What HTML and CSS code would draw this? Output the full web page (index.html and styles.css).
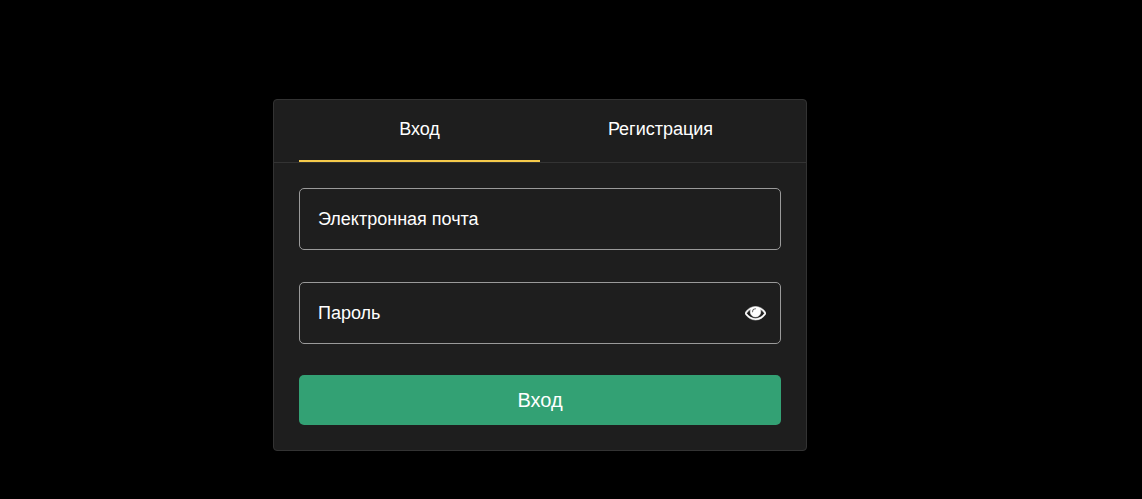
FILE: index.html
```html
<!DOCTYPE html>
<html lang="ru">
<head>
    <meta charset="UTF-8">
    <meta name="viewport" content="width=device-width, initial-scale=1.0">
    <title>Вход</title>
    <link rel="stylesheet" href="styles.css">
</head>
<body>
    <main class="page">
        <div class="auth-card">
            <div class="tabs">
                <button type="button" class="tab active">Вход</button>
                <button type="button" class="tab">Регистрация</button>
            </div>
            <form class="auth-form">
                <div class="field">
                    <input type="email" id="email" class="field-input" placeholder=" ">
                    <label for="email" class="field-label">Электронная почта</label>
                </div>
                <div class="field">
                    <input type="password" id="password" class="field-input" placeholder=" ">
                    <label for="password" class="field-label">Пароль</label>
                    <button type="button" class="toggle-password" aria-label="Показать пароль">
                        <svg width="21" height="21" viewBox="0 0 1792 1792" fill="currentColor" stroke="currentColor" stroke-width="45">
                            <path d="M1664 960q-152-236-381-353 61 104 61 225 0 185-131.500 316.500t-316.500 131.500-316.500-131.500-131.500-316.500q0-121 61-225-229 117-381 353 133 205 333.500 326.500t434.500 121.500 434.500-121.500 333.500-326.500zm-720-384q0-20-14-34t-34-14q-125 0-214.500 89.500t-89.500 214.500q0 20 14 34t34 14 34-14 14-34q0-86 61-147t147-61q20 0 34-14t14-34zm848 384q0 34-20 69-140 230-376.500 368.500t-499.500 138.500-499.500-139-376.500-368q-20-35-20-69t20-69q140-229 376.500-368t499.500-139 499.500 139 376.500 368q20 35 20 69z"/>
                        </svg>
                    </button>
                </div>
                <button type="submit" class="submit-btn">Вход</button>
            </form>
        </div>
    </main>

    <script>
    const password = document.getElementById('password');
    document.querySelector('.toggle-password').addEventListener('click', function() {
        password.type = password.type === 'password' ? 'text' : 'password';
    });
    </script>
</body>
</html>
```
FILE: styles.css
```css
* {
    box-sizing: border-box;
}

body {
    margin: 0;
    background: #000;
    color: #fff;
    font-family: "Liberation Sans", Arial, sans-serif;
    font-size: 18px;
}

button,
input {
    font-family: inherit;
    color: inherit;
}

.page {
    display: flex;
    justify-content: center;
    max-width: 1080px;
    padding: 99px 24px 48px;
}

.auth-card {
    width: 100%;
    max-width: 534px;
    background: #1e1e1e;
    border: 1px solid #333;
    border-radius: 4px;
}

.tabs {
    display: flex;
    padding: 0 25px;
    border-bottom: 1px solid #333;
}

.tab {
    flex: 1;
    padding: 18px 0 20px;
    background: none;
    border: none;
    border-bottom: 2px solid transparent;
    font-size: 18px;
    line-height: 22px;
    cursor: pointer;
}

.tab.active {
    border-bottom-color: #f5ca4b;
}

.auth-form {
    padding: 25px;
}

.field {
    position: relative;
}

.field + .field {
    margin-top: 32px;
}

.field-input {
    display: block;
    width: 100%;
    height: 62px;
    padding: 0 60px 0 19px;
    background: transparent;
    border: 1px solid #9a9a9a;
    border-radius: 5px;
    font-size: 18px;
    outline: none;
}

.field-input:focus {
    border-color: #fff;
}

/* the label sits in the empty input like a placeholder */
.field-label {
    position: absolute;
    top: 20px;
    left: 19px;
    line-height: 22px;
    cursor: text;
}

.field-input:not(:placeholder-shown) + .field-label {
    display: none;
}

.toggle-password {
    position: absolute;
    top: 20px;
    right: 15px;
    padding: 0;
    background: none;
    border: none;
    cursor: pointer;
}

.toggle-password svg {
    display: block;
}

.submit-btn {
    display: block;
    width: 100%;
    height: 50px;
    margin-top: 31px;
    background: #33a174;
    border: none;
    border-radius: 5px;
    font-size: 20px;
    cursor: pointer;
}
```
